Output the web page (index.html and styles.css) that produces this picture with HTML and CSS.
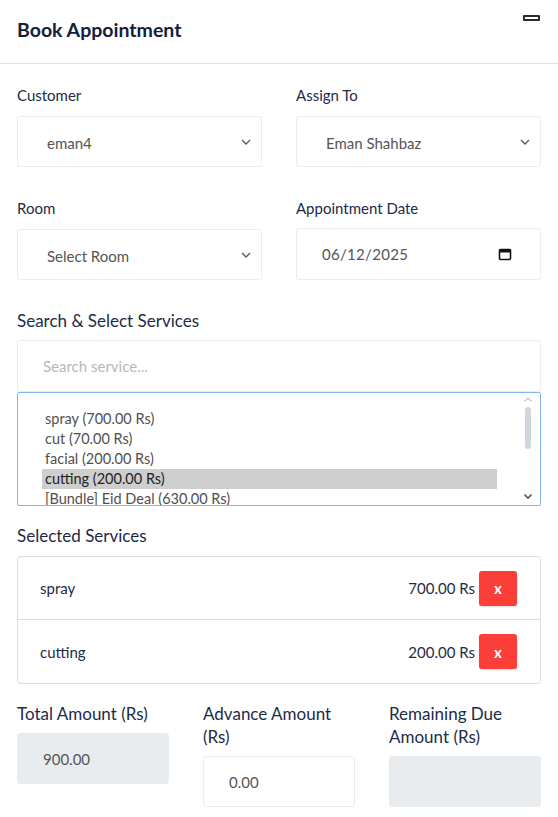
FILE: index.html
```html
<!DOCTYPE html>
<html>
<head>
<meta charset="utf-8">
<link rel="stylesheet" href="styles.css">
</head>
<body>
<div class="panel">
  <div class="header">
    <h1 class="title">Book Appointment</h1>
    <span class="minimize"></span>
  </div>
  <div class="body">
    <div class="row2">
      <div class="field">
        <div class="label">Customer</div>
        <div class="control select"><span>eman4</span><svg class="chev" width="10" height="6" viewBox="0 0 10 6"><path d="M1 1l4 4 4-4" fill="none" stroke="#555" stroke-width="1.3"/></svg></div>
      </div>
      <div class="field">
        <div class="label">Assign To</div>
        <div class="control select"><span>Eman Shahbaz</span><svg class="chev" width="10" height="6" viewBox="0 0 10 6"><path d="M1 1l4 4 4-4" fill="none" stroke="#555" stroke-width="1.3"/></svg></div>
      </div>
    </div>
    <div class="row2 gap-top">
      <div class="field">
        <div class="label">Room</div>
        <div class="control select"><span>Select Room</span><svg class="chev" width="10" height="6" viewBox="0 0 10 6"><path d="M1 1l4 4 4-4" fill="none" stroke="#555" stroke-width="1.3"/></svg></div>
      </div>
      <div class="field">
        <div class="label">Appointment Date</div>
        <div class="control date"><span>06/12/2025</span><svg class="cal" width="14" height="14" viewBox="0 0 14 14"><rect x="1.5" y="2.5" width="11" height="10" rx="1" fill="none" stroke="#111" stroke-width="1.6"/><rect x="1.5" y="2.5" width="11" height="3" fill="#111"/></svg></div>
      </div>
    </div>

    <div class="label big sect">Search &amp; Select Services</div>
    <div class="control search"><span class="ph">Search service...</span></div>
    <div class="listbox">
      <div class="options">
        <div class="opt">spray (700.00 Rs)</div>
        <div class="opt">cut (70.00 Rs)</div>
        <div class="opt">facial (200.00 Rs)</div>
        <div class="opt sel">cutting (200.00 Rs)</div>
        <div class="opt">[Bundle] Eid Deal (630.00 Rs)</div>
      </div>
      <div class="scrollbar">
        <svg width="10" height="7" viewBox="0 0 10 7"><path d="M1.5 5.5l3.5-3.5 3.5 3.5" fill="none" stroke="#c4c8cc" stroke-width="1.4"/></svg>
        <div class="thumb"></div>
        <svg class="down" width="10" height="7" viewBox="0 0 10 7"><path d="M1.5 1.5l3.5 3.5 3.5-3.5" fill="none" stroke="#555" stroke-width="1.6"/></svg>
      </div>
    </div>

    <div class="label big sect2">Selected Services</div>
    <div class="card">
      <div class="item"><span class="name">spray</span><span class="price">700.00 Rs</span><button class="remove">x</button></div>
      <div class="item"><span class="name">cutting</span><span class="price">200.00 Rs</span><button class="remove">x</button></div>
    </div>

    <div class="row3">
      <div class="field">
        <div class="label big">Total Amount (Rs)</div>
        <div class="control amount gray"><span>900.00</span></div>
      </div>
      <div class="field">
        <div class="label big">Advance Amount (Rs)</div>
        <div class="control amount"><span>0.00</span></div>
      </div>
      <div class="field">
        <div class="label big">Remaining Due Amount (Rs)</div>
        <div class="control amount gray"></div>
      </div>
    </div>
  </div>
</div>
</body>
</html>
```
FILE: styles.css
```css
* { box-sizing: border-box; }
html, body { margin: 0; padding: 0; background: #fff; }
body { font-family: Lato, "Noto Sans", sans-serif; color: #1c2b48; }
.panel { width: 558px; }
.header {
  height: 64px;
  border-bottom: 1px solid #e2e2e2;
  display: flex;
  justify-content: space-between;
  align-items: flex-start;
  padding: 0 18px 0 17px;
}
.title {
  margin: 0;
  font-size: 19.5px;
  font-weight: 700;
  color: #12203d;
  line-height: 24px;
  padding-top: 18px;
}
.minimize {
  margin-top: 15px;
  width: 17px;
  height: 6px;
  border: 2px solid #2a2a2a;
  background: #fff;
  border-radius: 1px;
}
.body { padding: 21px 17px 0 17px; }
.row2 { display: grid; grid-template-columns: 1fr 1fr; column-gap: 34px; }
.gap-top { margin-top: 31px; }
.field { display: flex; flex-direction: column; }
.label { font-size: 15px; line-height: 20px; color: #1c2b48; margin-bottom: 11px; }
.label.big { font-size: 17px; line-height: 23px; }
.control {
  height: 51px;
  border: 1px solid #ececec;
  border-radius: 3px;
  display: flex;
  align-items: center;
  font-size: 15px;
  color: #555;
  background: #fff;
}
.select { padding: 0 10px 0 29px; justify-content: space-between; }
.select span { padding-top: 2px; }
.chev { margin-top: 1px; }
.date { padding: 0 28px 0 25px; justify-content: space-between; margin-top: -1px; height: 52px; }
.date span { letter-spacing: 0.3px; }
.sect { margin-top: 29px; margin-bottom: 8px; }
.search { height: 52px; padding-left: 25px; }
.ph { color: #b8b8b8; }
.listbox {
  height: 114px;
  border: 1px solid #7fb5ef;
  border-radius: 2px;
  display: flex;
  overflow: hidden;
}
.options { flex: 1; padding: 16px 23px 0 24px; }
.opt { height: 20px; line-height: 20px; font-size: 14.5px; color: #505050; padding-left: 3px; white-space: nowrap; }
.opt.sel { background: #cecece; color: #222; }
.scrollbar {
  width: 20px;
  display: flex;
  flex-direction: column;
  align-items: center;
  padding-top: 3px;
  padding-right: 4px;
}
.thumb { width: 6px; height: 42px; background: #cdd6df; border-radius: 3px; margin-top: 4px; }
.down { margin-top: auto; margin-bottom: 5px; }
.sect2 { margin-top: 18px; margin-bottom: 9px; }
.card { border: 1px solid #dedede; border-radius: 4px; }
.item {
  height: 62px;
  display: flex;
  align-items: center;
  padding: 0 23px 0 22px;
  font-size: 15px;
  color: #1c2b48;
}
.item + .item { border-top: 1px solid #dedede; height: 64px; }
.name { flex: 1; }
.price { margin-right: 4px; }
.remove {
  width: 38px;
  height: 35px;
  border: none;
  border-radius: 3px;
  background: #fb3e38;
  color: #fff;
  font-family: inherit;
  font-weight: 700;
  font-size: 15px;
  box-shadow: 0 1px 2px rgba(0,0,0,0.15);
  padding: 0;
}
.row3 { display: grid; grid-template-columns: 1fr 1fr 1fr; column-gap: 34px; margin-top: 18px; }
.row3 .label { margin-bottom: 8px; }
.amount { padding-left: 25px; height: 51px; }
.gray { background: #e9ecef; border-color: #e9ecef; }
```
